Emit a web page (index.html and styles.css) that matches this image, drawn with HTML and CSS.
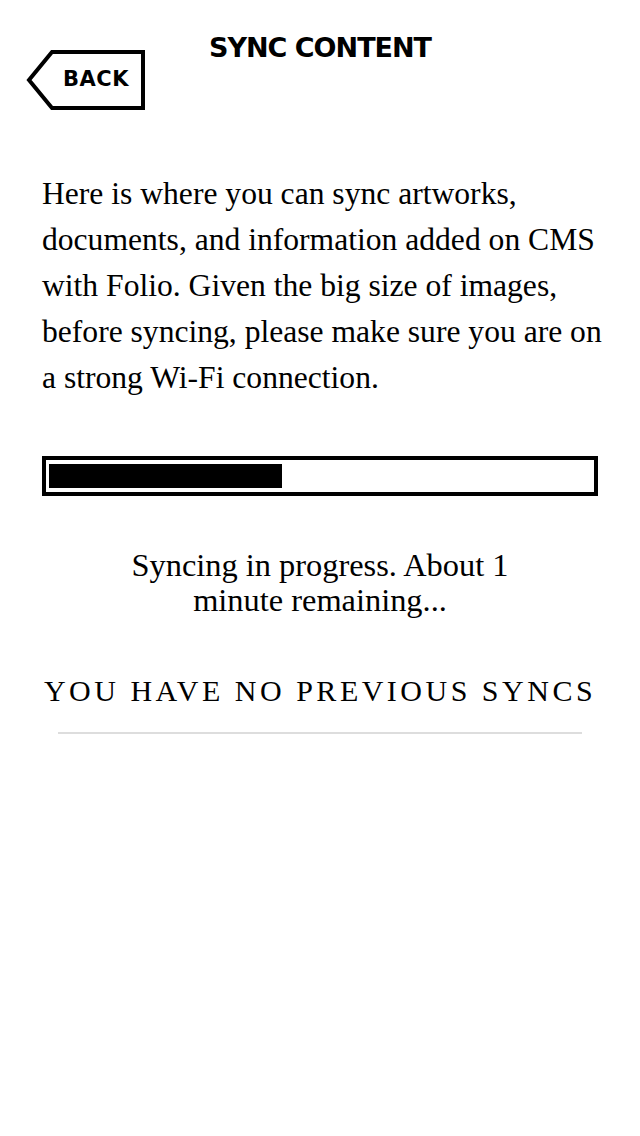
FILE: index.html
```html
<!DOCTYPE html>
<html>
<head>
<meta charset="utf-8">
<link rel="stylesheet" href="styles.css">
</head>
<body>
<div class="screen">
  <header class="topbar">
    <a class="back">
      <svg class="back-shape" width="120" height="60" viewBox="0 0 120 60">
        <path d="M117 2 H26 L3 30 L26 58 H117 Z" fill="#fff" stroke="#000" stroke-width="4" stroke-linejoin="miter"/>
      </svg>
      <span class="back-label">BACK</span>
    </a>
    <h1 class="title">SYNC CONTENT</h1>
  </header>
  <p class="intro">Here is where you can sync artworks, documents, and information added on CMS with Folio. Given the big size of images, before syncing, please make sure you are on a strong Wi-Fi connection.</p>
  <div class="progress">
    <div class="progress-fill" style="width: 43%"></div>
  </div>
  <p class="status">Syncing in progress. About 1 minute remaining...</p>
  <h2 class="history">YOU HAVE NO PREVIOUS SYNCS</h2>
  <hr class="divider">
</div>
</body>
</html>
```
FILE: styles.css
```css
* { box-sizing: border-box; }
html, body { margin: 0; padding: 0; background: #fff; }
.screen {
  width: 640px;
  height: 1136px;
  display: flex;
  flex-direction: column;
  color: #000;
  font-family: "Liberation Serif", "DejaVu Serif", serif;
}
.topbar {
  position: relative;
  height: 130px;
  padding-top: 29px;
}
.title {
  margin: 0;
  text-align: center;
  font-family: "DejaVu Sans", "Lato", sans-serif;
  font-weight: bold;
  font-size: 27px;
  letter-spacing: -1px;
  line-height: 38px;
}
.back {
  position: absolute;
  left: 26px;
  top: 50px;
  width: 120px;
  height: 60px;
  display: block;
}
.back-shape { position: absolute; left: 0; top: 0; }
.back-label {
  position: absolute;
  left: 37px;
  top: 17px;
  font-family: "DejaVu Sans", sans-serif;
  font-weight: bold;
  font-size: 21px;
  letter-spacing: 0.5px;
  line-height: 24px;
}
.intro {
  margin: 41px 0 0 42px;
  width: 560px;
  font-size: 31.6px;
  line-height: 46px;
}
.progress {
  margin: 55px 0 0 42px;
  width: 556px;
  height: 40px;
  border: 4px solid #000;
  padding: 4px 3px;
}
.progress-fill {
  height: 100%;
  background: #000;
}
.status {
  margin: 52px auto 0;
  width: 420px;
  text-align: center;
  font-size: 32.4px;
  line-height: 35px;
}
.history {
  margin: 53px 0 0;
  text-align: center;
  font-weight: normal;
  font-size: 30px;
  letter-spacing: 3.5px;
  line-height: 40px;
}
.divider {
  margin: 21px 58px 0;
  border: 0;
  height: 2px;
  background: #ddd;
}
```
